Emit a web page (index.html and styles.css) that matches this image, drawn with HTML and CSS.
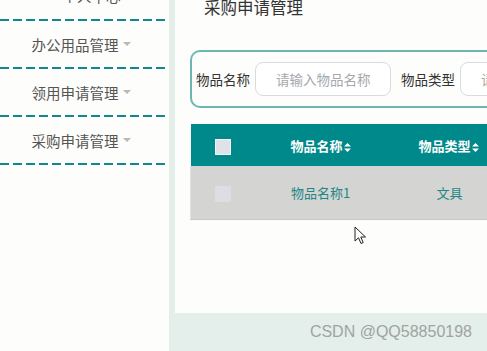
FILE: index.html
```html
<!DOCTYPE html>
<html lang="zh-CN">
<head>
  <meta charset="UTF-8">
  <title>采购申请管理</title>
  <link rel="stylesheet" href="styles.css">
</head>
<body>
  <div class="page">
    <div class="sidebar">
      <div class="menu-item first">个人中心</div>
      <div class="menu-item">办公用品管理<span class="caret"></span></div>
      <div class="menu-item">领用申请管理<span class="caret"></span></div>
      <div class="menu-item">采购申请管理<span class="caret"></span></div>
    </div>
    <div class="right">
      <div class="main">
        <h2 class="title">采购申请管理</h2>
        <div class="search-box">
          <label>物品名称</label>
          <div class="input">请输入物品名称</div>
          <label>物品类型</label>
          <div class="input">请输入物品类型</div>
        </div>
        <div class="table-wrap">
          <table class="data-table">
            <thead>
              <tr>
                <th class="check"><span class="box"></span></th>
                <th class="name">物品名称<svg class="sort" width="7" height="9" viewBox="0 0 7 9"><path d="M3.5 0 L7 3.6 L0 3.6 Z M3.5 9 L7 5.4 L0 5.4 Z" fill="#fff"/></svg></th>
                <th class="type">物品类型<svg class="sort" width="7" height="9" viewBox="0 0 7 9"><path d="M3.5 0 L7 3.6 L0 3.6 Z M3.5 9 L7 5.4 L0 5.4 Z" fill="#fff"/></svg></th>
              </tr>
            </thead>
            <tbody>
              <tr>
                <td class="check"><span class="box"></span></td>
                <td class="name">物品名称1</td>
                <td class="type">文具</td>
              </tr>
            </tbody>
          </table>
        </div>
      </div>
      <div class="footer">CSDN @QQ58850198</div>
    </div>
  </div>

  <svg class="cursor" width="14" height="20" viewBox="0 0 14 20">
    <path d="M1 1 L1 15 L4.5 11.8 L7 17.5 L9.2 16.6 L6.8 11 L11.5 11 Z" fill="#fff" stroke="#222" stroke-width="1" stroke-linejoin="round"/>
  </svg>
</body>
</html>
```

FILE: styles.css
```css
html, body {
  margin: 0;
  padding: 0;
  height: 100%;
  overflow: hidden;
}
body {
  font-family: "Noto Sans CJK SC", "Noto Sans", sans-serif;
  background: #fdfdfb;
  position: relative;
}
.page {
  display: flex;
  height: 351px;
}

/* sidebar */
.sidebar {
  width: 169px;
  flex-shrink: 0;
  background: #fdfdfb;
  margin-top: -28px;
}
.menu-item {
  height: 48px;
  box-sizing: border-box;
  padding: 0 7px 2px 0;
  display: flex;
  align-items: center;
  justify-content: center;
  font-size: 14.5px;
  color: #555;
  background-image: repeating-linear-gradient(to right, #11898a 0 9px, transparent 9px 13px);
  background-size: 100% 2px;
  background-position: 0 100%;
  background-repeat: no-repeat;
}
.menu-item.first {
  height: 49px;
  padding-left: 14px;
  padding-right: 0;
}
.caret {
  display: inline-block;
  width: 0;
  height: 0;
  margin-left: 4px;
  border-left: 4px solid transparent;
  border-right: 4px solid transparent;
  border-top: 4px solid #b8b8b8;
}

/* right side */
.right {
  flex: 1;
  background: #e4efeb;
  padding-left: 6px;
  display: flex;
  flex-direction: column;
  min-width: 0;
}
.main {
  background: #fdfdfb;
  height: 314px;
  padding-left: 15px;
  overflow: hidden;
}
.title {
  margin: -5px 0 0 14px;
  font-size: 16.5px;
  font-weight: normal;
  color: #333;
  line-height: 24px;
}
.search-box {
  margin-top: 31px;
  height: 54px;
  border: 2px solid #6eb7b1;
  border-right: none;
  border-radius: 10px 0 0 10px;
  display: flex;
  align-items: center;
  padding-left: 4px;
  white-space: nowrap;
}
.search-box label {
  font-size: 13.5px;
  color: #333;
  margin-right: 5px;
}
.input {
  width: 114px;
  height: 32px;
  flex-shrink: 0;
  border: 1px solid #d9dbdf;
  border-radius: 8px;
  padding-left: 20px;
  margin-right: 10px;
  font-size: 13.5px;
  line-height: 32px;
  color: #a6a8ad;
  background: #fff;
}

/* table */
.table-wrap {
  margin-top: 16px;
  overflow: hidden;
}
.data-table {
  border-collapse: collapse;
  width: 340px;
  table-layout: fixed;
}
.data-table th, .data-table td {
  text-align: center;
  padding: 0;
  white-space: nowrap;
}
.data-table th {
  background: #00898a;
  color: #fff;
  height: 42px;
  font-size: 13px;
  font-weight: bold;
}
.data-table td {
  background: #d4d4d3;
  height: 53px;
  font-size: 13px;
  color: #1f8784;
  border-bottom: 1px solid #c8c8c8;
}
.data-table td.check {
  border-left: 1px solid #e3e3e3;
}
.check { width: 64px; }
.name { width: 132px; }
.type { width: 144px; }
.data-table th.type { text-align: left; padding-left: 32px; }
.data-table td.type { text-align: left; padding-left: 50px; }
.sort {
  margin-left: 1px;
  vertical-align: -1px;
}
.box {
  display: inline-block;
  width: 14px;
  height: 14px;
  vertical-align: middle;
  background: #dfe2e8;
  border: 1px solid #f2f4f7;
}
td .box {
  background: #dcdee3;
  border-color: #dcdee3;
}

/* footer watermark */
.footer {
  flex: 1;
  text-align: right;
  padding-right: 15px;
  font-family: "Liberation Sans", Arial, sans-serif;
  font-size: 16px;
  color: #a0a3a2;
  line-height: 38px;
}

.cursor {
  position: absolute;
  left: 354px;
  top: 226px;
}
```
